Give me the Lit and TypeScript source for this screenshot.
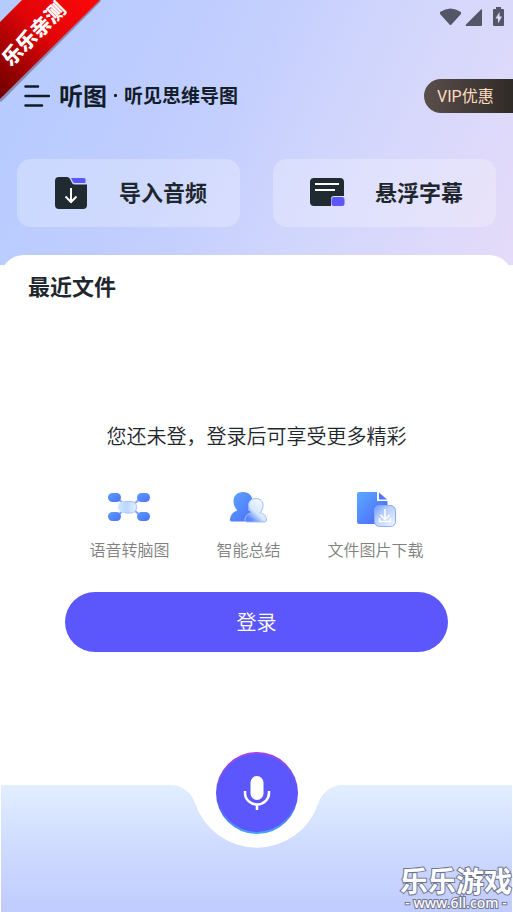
import { LitElement, html, svg, css } from "lit";
import { customElement } from "lit/decorators.js";

const mindMapIcon = svg`
  <svg class="feature-icon" viewBox="0 0 42 38" aria-hidden="true">
    <defs>
      <linearGradient id="node" x1="0" y1="0" x2="1" y2="1">
        <stop offset="0" stop-color="#5d9dff" /><stop offset="1" stop-color="#4a70fc" />
      </linearGradient>
      <linearGradient id="hub" x1="0" y1="0" x2="1" y2="0">
        <stop offset="0" stop-color="#d3e8ff" /><stop offset=".45" stop-color="#b9d6ff" /><stop offset="1" stop-color="#e6f4ff" />
      </linearGradient>
    </defs>
    <path d="M9 8 L16 14 M33 8 L26 14 M9 26 L16 20 M33 26 L26 20" stroke="#86a6fb" stroke-width="2" />
    <rect x="0" y="3" width="13" height="9" rx="4.500" fill="url(#node)" />
    <rect x="29" y="3" width="13" height="9" rx="4.500" fill="url(#node)" />
    <rect x="0" y="22" width="13" height="9" rx="4.500" fill="url(#node)" />
    <rect x="29" y="22" width="13" height="9" rx="4.500" fill="url(#node)" />
    <rect x="10" y="11" width="19" height="12" rx="6" fill="url(#hub)" />
    <path d="M17 11.500 H23 Q28.500 12 28.500 17 Q28.500 22.500 23 23 H17" fill="none" stroke="#a9c5ff" />
  </svg>`;

const peopleIcon = svg`
  <svg class="feature-icon" viewBox="0 0 42 38" aria-hidden="true">
    <defs>
      <linearGradient id="person" x1="0" y1="0" x2="1" y2="1">
        <stop offset="0" stop-color="#5ea4ff" /><stop offset="1" stop-color="#4a6dfb" />
      </linearGradient>
      <linearGradient id="glass" x1="0" y1="1" x2=".7" y2=".2">
        <stop offset="0" stop-color="#4f7dfb" /><stop offset=".25" stop-color="#5f8cfd" /><stop offset=".6" stop-color="#d5e6ff" /><stop offset="1" stop-color="#ecf6ff" />
      </linearGradient>
    </defs>
    <path d="M16 2 C22 2 25.500 6 25.500 11 C25.500 15 23 18 21 20 C27 22 29 26 29 31.500 H5 Q2 31.500 3 29 C4 24 6 22 10.500 20.500 C8 18 6.500 15 6.500 11 C6.500 6 10 2 16 2Z" fill="url(#person)" />
    <path d="M29 8.500 C33.500 8.500 36 11.500 36 15.500 C36 18.500 35 21 33 22.500 C37 24 39.500 26 39.500 30 Q39.500 32 37.500 32 H20 Q18 32 18 30 C18 26 21 23.500 24.500 22.500 C22.500 21 21.500 18.500 21.500 15.500 C21.500 11.500 24 8.500 29 8.500Z" fill="url(#glass)" stroke="#a2bdff" />
  </svg>`;

const fileIcon = svg`
  <svg class="feature-icon" viewBox="0 0 42 38" aria-hidden="true">
    <defs>
      <linearGradient id="sheet" x1="0" y1="0" x2="1" y2="1">
        <stop offset="0" stop-color="#5ca9ff" /><stop offset="1" stop-color="#4963fa" />
      </linearGradient>
      <linearGradient id="tile" x1="0" y1="0" x2="1" y2="1">
        <stop offset="0" stop-color="#6c96fe" /><stop offset=".35" stop-color="#b4cbff" /><stop offset="1" stop-color="#f0f7ff" />
      </linearGradient>
    </defs>
    <path d="M4 2 H22 V11 H32.500 V34 H4 Q2 34 2 32 V4 Q2 2 4 2Z" fill="url(#sheet)" />
    <path d="M24 2.500 L32 9.500 H25 Q24 9.500 24 8.500Z" fill="#4e75fb" />
    <rect x="19.500" y="15.500" width="21" height="21" rx="5" fill="url(#tile)" stroke="#8caeff" />
    <path d="M30 19 V29 M25.500 25 L30 29.500 L34.500 25 M24.500 28 V31.500 H35.500 V28" fill="none" stroke="#fff" stroke-width="1.500" />
  </svg>`;

@customElement("app-root")
export class AppRoot extends LitElement {
  static styles = css`
    :host {
      display: flex;
      flex-direction: column;
      position: relative;
      min-height: 100vh;
      overflow: hidden;
      background: #fff;
      color: #1f272e;
      font-family: Roboto, "Noto Sans CJK SC", sans-serif;
      font-weight: 350;
    }
    * { box-sizing: border-box; }
    svg { display: block; flex: none; }
    button { border: 0; margin: 0; padding: 0; font: inherit; color: inherit; cursor: pointer; background: none; }
    h1, h2, p { margin: 0; }

    .hero {
      padding-bottom: 38px;
      background: linear-gradient(115deg, #b5cbff 0%, #c0cdfe 36%, #d3d7fc 68%, #e5dbf9 100%);
    }
    .status { display: flex; justify-content: flex-end; height: 34px; padding: 7px 8px 0 0; }
    .bar { display: flex; align-items: center; height: 34px; margin-top: 45px; padding-left: 22px; }
    .menu { width: 28px; height: 34px; }
    .brand {
      display: flex;
      align-items: center;
      flex: 1;
      padding: 0 0 2px 9px;
      font-size: 19px;
      line-height: 32px;
      font-weight: 700;
      color: #131d2c;
      font-family: "Noto Sans CJK SC", sans-serif;
      white-space: nowrap;
    }
    .brand-name { font-size: 24px; }
    .dot { width: 3px; height: 3px; margin: 0 7px; border-radius: 1px; background: #131d2c; }
    .vip {
      width: 89px;
      height: 34px;
      padding: 0 0 2px 13px;
      border-radius: 17px 0 0 17px;
      background: linear-gradient(90deg, #5a4e4c, #302b28);
      color: #fcdcbe;
      font-size: 16px;
      font-weight: 400;
      text-align: left;
    }
    .actions { display: grid; grid-template-columns: 1fr 1fr; gap: 33px; margin-top: 46px; padding: 0 17px; }
    .card {
      display: flex;
      align-items: center;
      justify-content: center;
      gap: 30px;
      height: 68px;
      padding-left: 3px;
      border-radius: 14px;
      background: rgba(255, 255, 255, 0.25);
      font-size: 22px;
      font-weight: 700;
    }
    .card span { padding-bottom: 4px; }

    .sheet {
      flex: 1;
      margin-top: -10px;
      padding-top: 16px;
      border-radius: 24px 24px 0 0;
      background: #fff;
    }
    .title { padding-left: 28px; font-size: 22px; line-height: 34px; font-weight: 700; }
    .empty { display: flex; flex-direction: column; align-items: center; padding: 117px 65px 32px; }
    .message { font-size: 20px; line-height: 30px; white-space: nowrap; }
    .features { display: flex; gap: 47px; margin: 38px 0 28px; padding: 0; list-style: none; }
    .feature {
      display: flex;
      flex-direction: column;
      align-items: center;
      gap: 10px;
      color: #808080;
      font-size: 16px;
      line-height: 26px;
      white-space: nowrap;
    }
    .feature-icon { width: 42px; height: 38px; }
    .login {
      width: 100%;
      height: 60px;
      padding-bottom: 2px;
      border-radius: 30px;
      background: #5b57fc;
      color: #fff;
      font-size: 20px;
    }

    .dock {
      display: flex;
      justify-content: center;
      position: relative;
      height: 127px;
      margin: 0 1px;
      background: linear-gradient(180deg, #e2efff 0%, #d0dcfe 45%, #c0cbff 100%);
    }
    .notch { width: 200px; height: 64px; }
    .record {
      position: absolute;
      top: -33px;
      left: 50%;
      display: grid;
      place-items: center;
      width: 82px;
      height: 82px;
      margin-left: -41px;
      border: 2px solid transparent;
      border-radius: 50%;
      background:
        linear-gradient(#5b57fc, #5b57fc) padding-box,
        linear-gradient(180deg, #a146e8, #5b57fc 45%, #5b57fc 60%, #46a6fc) border-box;
    }

    .ribbon { position: absolute; top: 0; left: 0; }
    .ribbon-text { font: 900 20px "Noto Sans CJK SC", sans-serif; fill: #fff; }
    .mark {
      position: absolute;
      right: 1px;
      bottom: 2px;
      text-align: center;
      color: #fff;
      -webkit-text-stroke: 2px #70758f;
      paint-order: stroke fill;
      white-space: nowrap;
    }
    .mark-name { font: 700 28px/30px "Noto Sans CJK SC", sans-serif; }
    .mark-site { font: 500 14px/15px "Noto Sans", sans-serif; }
  `;

  render() {
    return html`
      <header class="hero">
        <div class="status">
          <svg width="68" height="22" viewBox="0 0 68 22" fill="#545667" aria-hidden="true">
            <path d="M3 5 Q13.500 -2 24 5 V7 L14 18 H13 L3 7Z" />
            <path d="M45 2 V18 Q45 19 44 19 H29 Q28 18.500 29 17.500 L44 2.500Z" />
            <path d="M59 0 H64 V2 H66 Q67 2 67 3 V18 Q67 19 66 19 H57 Q56 19 56 18 V3 Q56 2 57 2 H59Z" />
            <path d="M62.500 5 L58.500 11.500 H61 V16.500 L65 9.500 H62.500Z" fill="#dcdcfb" />
          </svg>
        </div>
        <div class="bar">
          <button class="menu" aria-label="菜单">
            <svg width="28" height="34" viewBox="0 0 28 34" fill="none" stroke="#111b28" stroke-width="2.500" stroke-linecap="round">
              <path d="M3.500 7.500 H16 M3.500 17 H27 M3.500 26.500 H20" />
            </svg>
          </button>
          <h1 class="brand"><span class="brand-name">听图</span><span class="dot"></span><span>听见思维导图</span></h1>
          <button class="vip">VIP优惠</button>
        </div>
        <nav class="actions">
          <button class="card">
            <svg width="36" height="36" viewBox="0 0 36 36" aria-hidden="true">
              <path d="M6 2 H14 Q16 2 17 4 L19 8 Q20 9.500 22 9.500 H34 V30 Q34 34 30 34 H6 Q2 34 2 30 V6 Q2 2 6 2Z" fill="#202b31" />
              <path d="M18 3 H31 Q32.500 3 32.500 4.500 V8 H22 Q20.500 8 20 7Z" fill="#5b57fc" />
              <path d="M18 13 V26 M12.500 21.500 L18 27 L23.500 21.500" fill="none" stroke="#fff" stroke-width="2" />
            </svg>
            <span>导入音频</span>
          </button>
          <button class="card">
            <svg width="36" height="36" viewBox="0 0 36 36" aria-hidden="true">
              <path d="M5 3 H31 Q35 3 35 7 V21 H25 Q22 21 22 24 V31 H5 Q1 31 1 27 V7 Q1 3 5 3Z" fill="#202b31" />
              <path d="M6 9 H30 M6 15 H26" stroke="#fff" stroke-width="2" />
              <rect x="22.500" y="22" width="13" height="9" rx="2.500" fill="#5b57fc" />
            </svg>
            <span>悬浮字幕</span>
          </button>
        </nav>
      </header>

      <main class="sheet">
        <h2 class="title">最近文件</h2>
        <section class="empty">
          <p class="message">您还未登，登录后可享受更多精彩</p>
          <ul class="features">
            <li class="feature">${mindMapIcon}<span>语音转脑图</span></li>
            <li class="feature">${peopleIcon}<span>智能总结</span></li>
            <li class="feature">${fileIcon}<span>文件图片下载</span></li>
          </ul>
          <button class="login">登录</button>
        </section>
      </main>

      <footer class="dock">
        <svg class="notch" viewBox="0 0 200 64" aria-hidden="true">
          <path d="M13 0 A26 26 0 0 1 38 18 A65 65 0 0 0 161.500 18 A26 26 0 0 1 186 0Z" fill="#fff" />
        </svg>
        <button class="record" aria-label="录音">
          <svg width="30" height="38" viewBox="0 0 30 38" fill="none" stroke="#fff" stroke-width="2.500">
            <rect x="8.500" y="2" width="13" height="24" rx="6.500" fill="#fff" stroke="none" />
            <path d="M3 17 V19 A12 11.500 0 0 0 27 19 V17 M15 30.500 V36" />
          </svg>
        </button>
      </footer>

      <svg class="ribbon" width="104" height="104" viewBox="0 0 104 104">
        <defs>
          <linearGradient id="red" x1="0" y1="1" x2="1" y2="0">
            <stop offset="0" stop-color="#6e0000" /><stop offset=".2" stop-color="#940000" />
            <stop offset=".55" stop-color="#e00508" /><stop offset="1" stop-color="#ff0808" />
          </linearGradient>
        </defs>
        <path d="M100 0 L0 101" stroke="#5c4a6a" stroke-opacity=".5" stroke-width="3" />
        <path d="M22 0 H100 L0 99 V22Z" fill="url(#red)" />
        <text class="ribbon-text" x="34" y="41" text-anchor="middle" transform="rotate(-45 34 34)">乐乐亲测</text>
      </svg>
      <div class="mark">
        <div class="mark-name">乐乐游戏</div>
        <div class="mark-site">- www.6ll.com -</div>
      </div>
    `;
  }
}
